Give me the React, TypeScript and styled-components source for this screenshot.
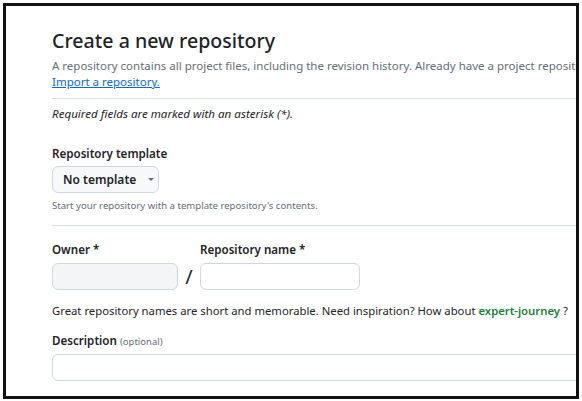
import styled, { createGlobalStyle } from "styled-components";

const Global = createGlobalStyle`
  html, body {
    margin: 0;
    padding: 0;
    background: #ffffff;
  }
  body {
    font-family: "Noto Sans", "Liberation Sans", sans-serif;
    color: #1f2328;
  }
`

const Frame = styled.div`
  box-sizing: border-box;
  margin: 3px 0 0 3px;
  width: 576px;
  height: 396px;
  border: 3px solid #111;
  overflow: hidden;
  padding: 22px 0 0 46px;
  background: #fff;
`

const Page = styled.div`
  width: 620px;
`

const Heading = styled.h1`
  margin: 0;
  font-size: 19.6px;
  line-height: 26px;
  font-weight: 500;
  color: #1f2328;
  white-space: nowrap;
`

const Lead = styled.p`
  margin: 4px 0 0;
  font-size: 11.5px;
  line-height: 16px;
  color: #656d76;
  white-space: nowrap;
`

const Link = styled.a`
  color: #0969da;
  text-decoration: underline;
`

const Rule = styled.hr<{ $gap: number }>`
  margin: ${p => p.$gap}px 0 0;
  border: 0;
  border-top: 1px solid #d8dee4;
`

const Note = styled.p`
  margin: 7px 0 0;
  font-size: 11.6px;
  line-height: 16px;
  font-style: italic;
  color: #1f2328;
`

const Label = styled.div<{ $gap?: number }>`
  margin-top: ${p => p.$gap ?? 0}px;
  font-size: 11.6px;
  line-height: 16px;
  font-weight: 600;
  color: #1f2328;
  white-space: nowrap;
`

const Optional = styled.span`
  font-size: 9.5px;
  font-weight: 400;
  color: #656d76;
`

const TemplateButton = styled.button`
  box-sizing: border-box;
  margin-top: 4px;
  display: flex;
  align-items: center;
  gap: 12px;
  width: 107px;
  height: 27px;
  padding: 0 0 0 10px;
  background: #f6f8fa;
  border: 1px solid #d0d7de;
  border-radius: 6px;
  font-family: inherit;
  font-size: 12px;
  font-weight: 600;
  color: #1f2328;
`

const Caret = styled.span`
  width: 0;
  height: 0;
  border-left: 3px solid transparent;
  border-right: 3px solid transparent;
  border-top: 3px solid #656d76;
`

const Hint = styled.p`
  margin: 6px 0 0;
  font-size: 9.6px;
  line-height: 14px;
  color: #656d76;
`

const NameRow = styled.div`
  margin-top: 16px;
  display: flex;
  align-items: flex-end;
`

const Field = styled.div<{ $width: number }>`
  display: flex;
  flex-direction: column;
  gap: 5px;
  width: ${p => p.$width}px;
`

const Input = styled.div<{ $disabled?: boolean; $width?: number }>`
  box-sizing: border-box;
  height: 27px;
  width: ${p => (p.$width ? `${p.$width}px` : "100%")};
  background: ${p => (p.$disabled ? "#f3f5f7" : "#fff")};
  border: 1px solid #d0d7de;
  border-radius: 6px;
`

const Slash = styled.span`
  width: 22px;
  height: 27px;
  display: flex;
  align-items: center;
  justify-content: center;
  font-size: 20px;
  color: #1f2328;
`

const Suggest = styled.p`
  margin: 13px 0 0;
  font-size: 11.3px;
  line-height: 16px;
  color: #1f2328;
  white-space: nowrap;
`

const Green = styled.span`
  color: #1a7f37;
  font-weight: 600;
`

const Description = styled(Input)`
  margin-top: 4px;
`

export default function App() {
  return (
    <>
      <Global />
      <Frame>
        <Page>
          <Heading>Create a new repository</Heading>
          <Lead>
            A repository contains all project files, including the revision history. Already have a project repository elsewhere?
            <br />
            <Link href="#">Import a repository.</Link>
          </Lead>
          <Rule $gap={8} />
          <Note>Required fields are marked with an asterisk (*).</Note>
          <Label $gap={24}>Repository template</Label>
          <TemplateButton>
            No template <Caret />
          </TemplateButton>
          <Hint>Start your repository with a template repository's contents.</Hint>
          <Rule $gap={12} />
          <NameRow>
            <Field $width={126}>
              <Label>Owner *</Label>
              <Input $disabled />
            </Field>
            <Slash>/</Slash>
            <Field $width={160}>
              <Label>Repository name *</Label>
              <Input />
            </Field>
          </NameRow>
          <Suggest>
            Great repository names are short and memorable. Need inspiration? How about <Green>expert-journey</Green> ?
          </Suggest>
          <Label $gap={14}>
            Description <Optional>(optional)</Optional>
          </Label>
          <Description $width={560} />
        </Page>
      </Frame>
    </>
  );
}
